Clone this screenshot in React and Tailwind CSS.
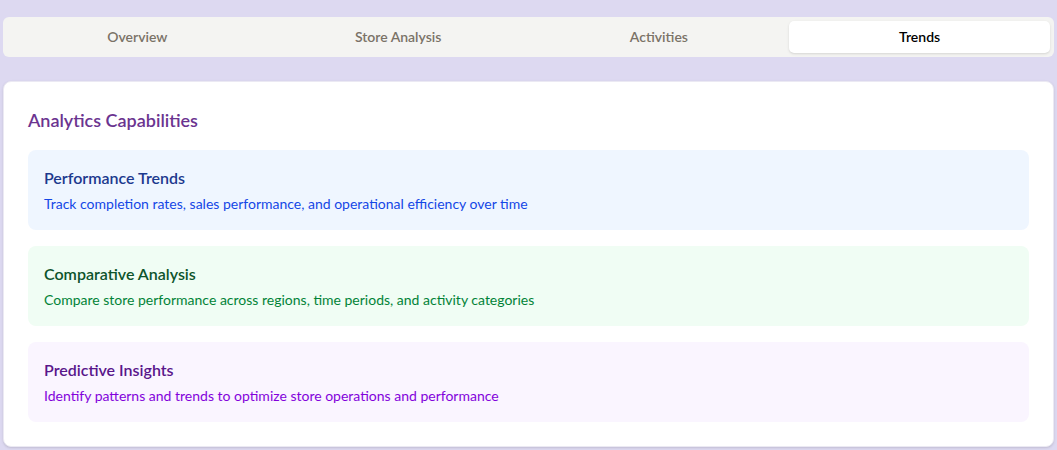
import { useState } from 'react';

const tabs = ['Overview', 'Store Analysis', 'Activities', 'Trends'];

const capabilities = [
  {
    title: 'Performance Trends',
    desc: 'Track completion rates, sales performance, and operational efficiency over time',
    box: 'bg-blue-50',
    head: 'text-blue-900',
    body: 'text-blue-700',
  },
  {
    title: 'Comparative Analysis',
    desc: 'Compare store performance across regions, time periods, and activity categories',
    box: 'bg-green-50',
    head: 'text-green-900',
    body: 'text-green-700',
  },
  {
    title: 'Predictive Insights',
    desc: 'Identify patterns and trends to optimize store operations and performance',
    box: 'bg-purple-50',
    head: 'text-purple-900',
    body: 'text-purple-700',
  },
];

export default function App() {
  const [active, setActive] = useState('Trends');

  return (
    <div className="min-h-[450px] bg-[#ddd9f1] px-[3px] pt-[17px] pb-[3px] font-['Segoe_UI','Lato',sans-serif]">
      <div className="grid grid-cols-4 rounded-md bg-[#f4f4f2] p-1">
        {tabs.map((t) => (
          <button
            key={t}
            onClick={() => setActive(t)}
            className={
              'h-8 rounded-[5px] text-sm font-semibold ' +
              (active === t ? 'bg-white text-black shadow-sm' : 'text-[#7a7267]')
            }
          >
            {t}
          </button>
        ))}
      </div>

      <div className="mt-6 rounded-lg border border-[#ebe9f3] bg-white p-6 shadow-sm">
        <h2 className="mb-4 text-lg font-semibold text-[#6b3490]">Analytics Capabilities</h2>
        <div className="flex flex-col gap-4">
          {capabilities.map((c) => (
            <div key={c.title} className={'rounded-lg p-4 ' + c.box}>
              <h3 className={'text-base font-semibold ' + c.head}>{c.title}</h3>
              <p className={'mt-1 text-sm ' + c.body}>{c.desc}</p>
            </div>
          ))}
        </div>
      </div>
    </div>
  );
}
